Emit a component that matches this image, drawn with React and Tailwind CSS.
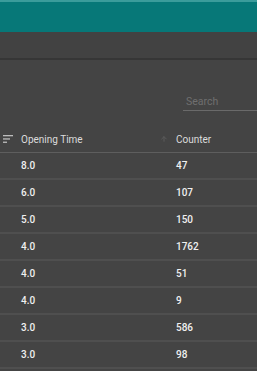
import { ArrowUp } from 'lucide-react';

const rows = [
  ['8.0', '47'],
  ['6.0', '107'],
  ['5.0', '150'],
  ['4.0', '1762'],
  ['4.0', '51'],
  ['4.0', '9'],
  ['3.0', '586'],
  ['3.0', '98'],
];

function FilterIcon() {
  return (
    <svg width="10" height="8" viewBox="0 0 10 8" className="shrink-0">
      <rect x="0" y="0" width="10" height="1.3" fill="#bdbdbd" />
      <rect x="0" y="3.3" width="7" height="1.3" fill="#bdbdbd" />
      <rect x="0" y="6.6" width="4" height="1.3" fill="#bdbdbd" />
    </svg>
  );
}

export default function App() {
  return (
    <div
      className="w-[257px] h-[371px] overflow-hidden bg-[#444444] text-[#e8e8e8]"
      style={{ fontFamily: 'Roboto, "Noto Sans", sans-serif' }}
    >
      <div className="h-[32px] bg-[#077878] border-t-2 border-[#3b9c9b]" />
      <div className="h-[28px] bg-[#424242] border-b-2 border-[#363636]" />

      <div className="flex justify-end mt-[30px]">
        <div className="w-[74px] h-[21px] border-b border-[#6a6a6a] flex items-end pb-[3px] pl-[3px]">
          <span className="text-[10.5px] leading-none text-[#6f6f6f]">Search</span>
        </div>
      </div>

      <div className="mt-[15px]">
        <div className="h-[27px] flex items-center border-b border-[#5e5e5e] text-[10px] text-[#dcdcdc]">
          <div className="w-[160px] flex items-center">
            <div className="w-[21px] flex pl-[3px]">
              <FilterIcon />
            </div>
            <span>Opening Time</span>
          </div>
          <div className="w-[16px] flex items-center">
            <ArrowUp size={8} strokeWidth={3} className="text-[#5a5a5a]" />
          </div>
          <span>Counter</span>
        </div>

        {rows.map(([t, c], i) => (
          <div
            key={i}
            className="h-[27px] flex items-center pb-[1px] border-b-2 border-[#4f4f4f] text-[10px] font-medium text-[#f0f0f0]"
          >
            <div className="w-[176px] pl-[21px]">{t}</div>
            <div>{c}</div>
          </div>
        ))}
      </div>
    </div>
  );
}
